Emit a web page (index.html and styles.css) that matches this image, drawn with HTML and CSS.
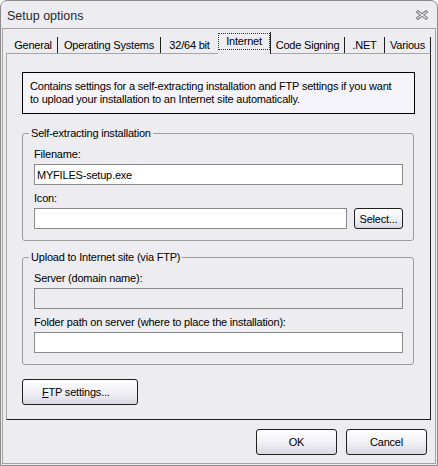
FILE: index.html
```html
<!DOCTYPE html>
<html>
<head>
<meta charset="utf-8">
<title>Setup options</title>
<link rel="stylesheet" href="styles.css">
</head>
<body>
<div class="window">
  <div class="titlebar">
    <span class="title">Setup options</span>
    <svg class="close" width="12" height="10" viewBox="0 0 12 10">
      <path d="M2 2 L10 8 M10 2 L2 8" stroke="#7a7a7a" stroke-width="3.2" stroke-linecap="square" fill="none"/>
      <path d="M2 2 L10 8 M10 2 L2 8" stroke="#ececf0" stroke-width="1.2" stroke-linecap="square" fill="none"/>
    </svg>
  </div>
  <div class="client">
    <div class="tabs">
      <div class="tab t-general">General</div>
      <div class="tab t-os">Operating Systems</div>
      <div class="tab t-bit">32/64 bit</div>
      <div class="tab tab-active t-internet"><span class="focus">Internet</span></div>
      <div class="tab t-code">Code Signing</div>
      <div class="tab t-net">.NET</div>
      <div class="tab t-various">Various</div>
    </div>
    <div class="panel">
      <div class="info">Contains settings for a self-extracting installation and FTP settings if you want<br>to upload your installation to an Internet site automatically.</div>
      <fieldset class="group">
        <legend>Self-extracting installation</legend>
        <label class="lbl lbl-first">Filename:</label>
        <input class="txt" type="text" value="MYFILES-setup.exe">
        <label class="lbl">Icon:</label>
        <div class="row">
          <input class="txt grow" type="text" value="">
          <button class="btn btn-select">Select...</button>
        </div>
      </fieldset>
      <fieldset class="group group2">
        <legend>Upload to Internet site (via FTP)</legend>
        <label class="lbl lbl-first">Server (domain name):</label>
        <input class="txt txt-disabled" type="text" value="" disabled>
        <label class="lbl">Folder path on server (where to place the installation):</label>
        <input class="txt" type="text" value="">
      </fieldset>
      <button class="btn btn-ftp"><u>F</u>TP settings...</button>
    </div>
    <div class="footer">
      <button class="btn btn-dlg">OK</button>
      <button class="btn btn-dlg">Cancel</button>
    </div>
  </div>
</div>
</body>
</html>
```
FILE: styles.css
```css
* { box-sizing: border-box; }
html, body { margin: 0; padding: 0; }
body {
  width: 438px;
  height: 466px;
  font-family: "Liberation Sans", Arial, sans-serif;
  font-size: 11px;
  letter-spacing: -0.2px;
  color: #000;
  background: #fff;
}
.window {
  width: 438px;
  height: 466px;
  border: 1px solid #8b8b8b;
  border-radius: 7px 7px 0 0;
  background: #edecf1;
  display: flex;
  flex-direction: column;
}
.titlebar {
  height: 27px;
  flex: none;
  display: flex;
  align-items: center;
  justify-content: space-between;
  padding: 0 9px 0 6px;
}
.title {
  font-size: 12.5px;
  letter-spacing: 0;
  color: #2a2a2a;
  padding-top: 3px;
}
.close { display: block; }
.client {
  flex: 1;
  margin: 0 1px 1px;
  border: 1px solid #a4a4a4;
  padding: 3px 4px 0 3px;
  display: flex;
  flex-direction: column;
}
.tabs {
  height: 21px;
  flex: none;
  display: flex;
  align-items: flex-end;
  padding-left: 3px;
}
.tab {
  height: 16px;
  line-height: 16px;
  text-align: center;
  border-right: 1px solid #1e1e1e;
  white-space: nowrap;
  flex: none;
}
.t-general { width: 49px; }
.t-os { width: 103px; }
.t-bit { width: 57px; border-right: none; }
.t-internet { width: 53px; }
.t-code { width: 74px; }
.t-net { width: 40px; }
.t-various { width: 46px; }
.tab-active {
  height: 22px;
  margin-bottom: -1px;
  padding-top: 1px;
  background: #edecf1;
  position: relative;
  z-index: 1;
}
.focus {
  display: block;
  height: 17px;
  line-height: 15px;
  border: 1px dotted #333;
}
.panel {
  height: 367px;
  flex: none;
  border-left: 1px solid #a6a6a6;
  border-top: 1px solid #a6a6a6;
  border-right: 1px solid #1e1e1e;
  border-bottom: 1px solid #1e1e1e;
  padding: 18px 15px 0;
}
.info {
  border: 1px solid #000;
  background: #f5f4fb;
  padding: 7px;
  line-height: 13px;
  white-space: nowrap;
}
.group {
  margin: 13px 1px 0 0;
  border: 1px solid #9c9c9c;
  border-radius: 3px;
  padding: 0 10px 11px 11px;
  min-width: 0;
}
.group2 { margin-top: 10px; }
.group legend {
  padding: 0 2px;
  margin-left: -5px;
  line-height: 13px;
}
.lbl {
  display: block;
  line-height: 13px;
  margin: 7px 0 3px;
}
.lbl-first { margin-top: 8px; }
.txt {
  display: block;
  width: 100%;
  height: 21px;
  margin: 0;
  border: 1px solid #8a8a8a;
  border-radius: 0;
  padding: 0 2px;
  font: inherit;
  letter-spacing: inherit;
  color: #000;
  background: #fff;
  outline: none;
}
.txt-disabled { background: #edecf1; }
.row {
  display: flex;
  gap: 7px;
}
.grow { flex: 1; width: auto; min-width: 0; }
.btn {
  font: inherit;
  letter-spacing: inherit;
  color: #000;
  border: 1px solid #202020;
  border-radius: 3px;
  background: linear-gradient(#ffffff, #eeedf4 60%, #d9d8e3);
  padding: 0;
  margin: 0;
  text-align: center;
}
.btn-select {
  width: 49px;
  height: 21px;
  flex: none;
}
.btn-ftp {
  display: block;
  width: 116px;
  height: 26px;
  margin-top: 14px;
  text-align: left;
  padding-left: 19px;
}
.btn-ftp u { text-decoration: underline; }
.footer {
  display: flex;
  justify-content: flex-end;
  gap: 9px;
  padding: 9px 4px 0 0;
}
.btn-dlg {
  width: 81px;
  height: 26px;
}
```
